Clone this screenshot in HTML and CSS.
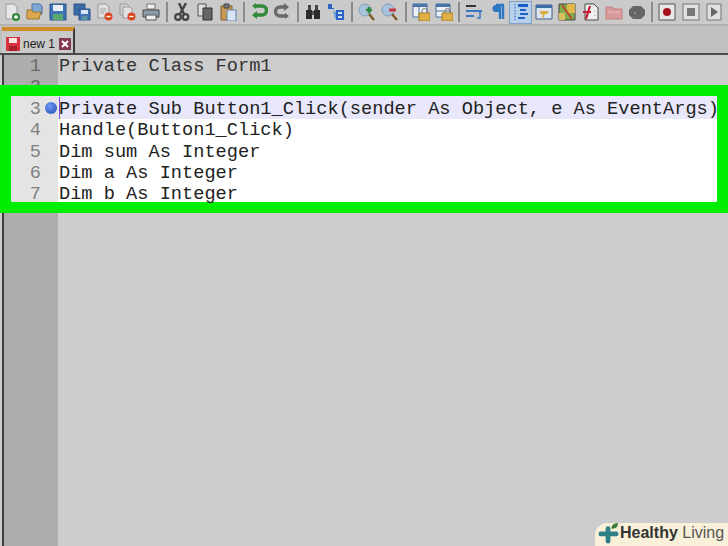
FILE: index.html
```html
<!DOCTYPE html>
<html lang="en">
<head>
<meta charset="utf-8">
<title>Notepad++ new 1</title>
<link rel="stylesheet" href="styles.css">
</head>
<body>
<div class="app">
  <div class="toolbar">
    <span class="tool"><svg viewBox="0 0 18 18"><path d="M3 1h8l3 3v12H3z" fill="#e6e6e6" stroke="#9a9a9a"/><circle cx="13" cy="14" r="4" fill="#2f8a3a"/><path d="M13 12v4M11 14h4" stroke="#fff" stroke-width="1.300"/></svg></span>
    <span class="tool"><svg viewBox="0 0 18 18"><path d="M6 1h8l2 2v8H6z" fill="#7fa8d8" stroke="#47709f"/><path d="M1 7h5l1 2h8l-2 7H1z" fill="#dca94f" stroke="#9b7430"/></svg></span>
    <span class="tool"><svg viewBox="0 0 18 18"><path d="M1 1h16v16H1z" fill="#3f73b8" stroke="#2b5288"/><path d="M4 2h10v6H4z" fill="#e6edf5"/><path d="M4 11h10v6H4z" fill="#5ba86b"/></svg></span>
    <span class="tool"><svg viewBox="0 0 18 18"><path d="M1 1h11v11H1z" fill="#3a6ca8" stroke="#2b5288"/><path d="M6 6h11v11H6z" fill="#3f73b8" stroke="#2b5288"/><path d="M8 7h7v4H8z" fill="#d8e4f0"/><path d="M8.500 13h6v4h-6z" fill="#5b93a0"/></svg></span>
    <span class="tool"><svg viewBox="0 0 18 18"><path d="M2 1h8l3 3v11H2z" fill="#dedede" stroke="#999"/><path d="M4 6h6M4 8h6M4 10h4" stroke="#aaa"/><circle cx="12.500" cy="13.500" r="4" fill="#d9481f"/><path d="M10.500 13.500h4" stroke="#fff" stroke-width="1.300"/></svg></span>
    <span class="tool"><svg viewBox="0 0 18 18"><path d="M1 1h7l2 2v9H1z" fill="#cfcfcf" stroke="#999"/><path d="M4 4h7l2 2v9H4z" fill="#e2e2e2" stroke="#999"/><circle cx="12.500" cy="13.500" r="4" fill="#d9481f"/><path d="M10.500 13.500h4" stroke="#fff" stroke-width="1.300"/></svg></span>
    <span class="tool"><svg viewBox="0 0 18 18"><path d="M5 1h8v5H5z" fill="#f0f0f0" stroke="#777"/><path d="M1 7h16v7H1z" fill="#8e9bab" stroke="#444"/><path d="M4 12h10v5H4z" fill="#eee" stroke="#555"/></svg></span>
    <span class="sep"></span>
    <span class="tool"><svg viewBox="0 0 18 18"><path d="M13 0L7 11M6 0l5 11" stroke="#444" stroke-width="2.400" fill="none"/><circle cx="5" cy="14" r="2.800" fill="none" stroke="#444" stroke-width="2.200"/><circle cx="12.500" cy="14" r="2.800" fill="none" stroke="#444" stroke-width="2.200"/></svg></span>
    <span class="tool"><svg viewBox="0 0 18 18"><path d="M2 1h8v12H2z" fill="#ddd" stroke="#555"/><path d="M7 5h9v12H7z" fill="#666" stroke="#333"/></svg></span>
    <span class="tool"><svg viewBox="0 0 18 18"><path d="M2 3h11v14H2z" fill="#c99a55" stroke="#7e5b2a"/><path d="M5 1h5v4H5z" fill="#777" stroke="#444"/><path d="M8 7h9v11H8z" fill="#d8e6f4" stroke="#5d83ad"/></svg></span>
    <span class="sep"></span>
    <span class="tool"><svg viewBox="0 0 18 18"><path d="M6 3h6a4.500 4.500 0 0 1 0 9H4" fill="none" stroke="#2f8a3a" stroke-width="3.400"/><path d="M7 8l-5 4 5 4z" fill="#2f8a3a"/><path d="M6 0v6L2 3z" fill="#2f8a3a"/></svg></span>
    <span class="tool"><svg viewBox="0 0 18 18"><path d="M12 4H7a4.500 4.500 0 0 0 0 9h7" fill="none" stroke="#6a6a6a" stroke-width="3.400"/><path d="M11 0l5 4-5 4z" fill="#6a6a6a"/><path d="M12 10v6l4-3z" fill="#6a6a6a"/></svg></span>
    <span class="sep"></span>
    <span class="tool"><svg viewBox="0 0 18 18"><path d="M2 7h6v9H2zM10 7h6v9h-6z" fill="#2c2c2c"/><path d="M4 2h3v5H4zM11 2h3v5h-3z" fill="#444"/><path d="M8 8h2v4H8z" fill="#555"/></svg></span>
    <span class="tool"><svg viewBox="0 0 18 18"><path d="M1 1h4v4h2v1H1z" fill="#2c62c4"/><path d="M6 7l5 4-3 5z" fill="#6aa0d8"/><path d="M9 7h8v10H9z" fill="#2c62c4"/><path d="M11 9h4v2h-4zM11 13h4v2h-4z" fill="#cfe0f6"/></svg></span>
    <span class="sep"></span>
    <span class="tool"><svg viewBox="0 0 18 18"><circle cx="7" cy="7" r="6" fill="#a8c4dc" stroke="#7e9cb8"/><path d="M11 11l5 6" stroke="#7a5a20" stroke-width="2.400"/><path d="M8 7h6M11 4v6" stroke="#2f8a3a" stroke-width="2.500"/></svg></span>
    <span class="tool"><svg viewBox="0 0 18 18"><circle cx="7" cy="7" r="6" fill="#a8c4dc" stroke="#7e9cb8"/><path d="M11 11l5 6" stroke="#7a5a20" stroke-width="2.400"/><path d="M8 7h7" stroke="#c8383e" stroke-width="3"/></svg></span>
    <span class="sep"></span>
    <span class="tool"><svg viewBox="0 0 18 18"><path d="M1 1h14v13H1z" fill="#eef2f7" stroke="#4a6f9c"/><path d="M1 1h14v3H1z" fill="#4a74a8"/><path d="M7 4v10" stroke="#4a6f9c"/><path d="M7 10h11v8H7z" fill="#e0b045" stroke="#a67e23"/><path d="M10 10V8a2.500 2.500 0 0 1 5 0v2" fill="none" stroke="#777"/></svg></span>
    <span class="tool"><svg viewBox="0 0 18 18"><path d="M1 1h14v13H1z" fill="#eef2f7" stroke="#4a6f9c"/><path d="M1 1h14v3H1z" fill="#4a74a8"/><path d="M1 8h14" stroke="#4a6f9c"/><path d="M7 10h11v8H7z" fill="#e0b045" stroke="#a67e23"/><path d="M10 10V8a2.500 2.500 0 0 1 5 0v2" fill="none" stroke="#777"/></svg></span>
    <span class="sep"></span>
    <span class="tool"><svg viewBox="0 0 18 18"><path d="M1 3h10" stroke="#333" stroke-width="2"/><path d="M1 8h16" stroke="#3a78c4" stroke-width="2"/><path d="M1 13h8" stroke="#3a78c4" stroke-width="2"/><path d="M15 8v7h-3" fill="none" stroke="#3a78c4" stroke-width="1.500"/></svg></span>
    <span class="tool"><svg viewBox="0 0 18 18"><path d="M7 2h8M11 2v14M14 2v14" stroke="#2d78c0" stroke-width="2.400" fill="none"/><path d="M7 2a3.500 3.500 0 0 0 0 7h3V2z" fill="#2d78c0"/></svg></span>
    <span class="tool tool-active"><svg viewBox="0 0 18 18"><path d="M6 1h10v3H6zM8 6h6v2H8zM8 10h8v2H8z" fill="#1c5fc8"/><path d="M6 14h7v2H6z" fill="#1c5fc8"/><path d="M3 1v16" stroke="#1c5fc8" stroke-dasharray="1.500 1.500"/></svg></span>
    <span class="tool"><svg viewBox="0 0 18 18"><path d="M1 2h16v14H1z" fill="#dbe6f2" stroke="#3d5f88"/><path d="M1 2h16v3H1z" fill="#3d6ea8"/><path d="M5 8h9l-2 3h-2l-2 5-1-1 1-4H5z" fill="#dcae42"/></svg></span>
    <span class="tool"><svg viewBox="0 0 18 18"><path d="M1 1h16v16H1z" fill="#7fae4a" stroke="#444"/><path d="M9 1h8v9H9z" fill="#e0b848"/><path d="M1 10h6v7H1z" fill="#d8c05c"/><path d="M4 2l10 14" stroke="#c4402f" stroke-width="1.800"/></svg></span>
    <span class="tool"><svg viewBox="0 0 18 18"><path d="M4 1h9l4 4v12H4z" fill="#efefef" stroke="#444"/><path d="M9 3L5 16M2 9h8" stroke="#c41e32" stroke-width="2.200"/><path d="M14 8v1M14 12v1" stroke="#999"/></svg></span>
    <span class="tool"><svg viewBox="0 0 18 18"><path d="M1 4h6l2 2h8v10H1z" fill="#d89a9a" stroke="#c08080"/><path d="M3 9h12" stroke="#e8bcbc"/></svg></span>
    <span class="tool"><svg viewBox="0 0 18 18"><path d="M5 3h8l4 4v5l-4 4H5l-4-4V7z" fill="#666"/><circle cx="7" cy="10" r="1" fill="#999"/></svg></span>
    <span class="sep"></span>
    <span class="tool"><svg viewBox="0 0 18 18"><path d="M1 1h16v16H1z" fill="#e8e8e8" stroke="#555"/><circle cx="9" cy="9" r="4" fill="#a8141e"/></svg></span>
    <span class="tool"><svg viewBox="0 0 18 18"><path d="M1 1h16v16H1z" fill="#e0e0e0" stroke="#777"/><path d="M5 5h8v8H5z" fill="#777"/></svg></span>
    <span class="tool"><svg viewBox="0 0 18 18"><path d="M2 1h14v16H2z" fill="#e0e0e0" stroke="#777"/><path d="M6 4l7 5-7 5z" fill="#666"/></svg></span>
  </div>

  <div class="tabbar">
    <div class="tab">
      <svg class="tab-save" viewBox="0 0 14 14"><path d="M0 0h14v14H0z" fill="#d8323e"/><path d="M3 1h8v5H3z" fill="#f6e4e4"/><path d="M3 9h8v5H3z" fill="#a81e2a"/></svg>
      <span class="tab-name">new 1</span>
      <span class="tab-x"><svg viewBox="0 0 12 12"><path d="M3 3l6 6M9 3l-6 6" stroke="#fff" stroke-width="2"/></svg></span>
    </div>
  </div>

  <div class="editor">
    <div class="line"><span class="num">1</span><span class="code">Private Class Form1</span></div>
    <div class="line"><span class="num">2</span><span class="code"></span></div>
    <div class="focus">
      <div class="line line-current"><span class="num">3</span><i class="bookmark"></i><span class="code">Private Sub Button1_Click(sender As Object, e As EventArgs)</span></div>
      <div class="line"><span class="num">4</span><span class="code">Handle(Button1_Click)</span></div>
      <div class="line"><span class="num">5</span><span class="code">Dim sum As Integer</span></div>
      <div class="line"><span class="num">6</span><span class="code">Dim a As Integer</span></div>
      <div class="line"><span class="num">7</span><span class="code">Dim b As Integer</span></div>
    </div>
  </div>

  <div class="badge">
    <svg class="badge-logo" viewBox="0 0 22 22"><path d="M8 9V6a2.500 2.500 0 0 1 5 0v3h6a2.500 2.500 0 0 1 0 5h-6v5a2.500 2.500 0 0 1-5 0v-5H3a2.500 2.500 0 0 1 0-5z" fill="#2b7f85"/><path d="M14 6c0-3 2-6 7-6 0 4-2 6-7 6z" fill="#3b7d3a"/></svg>
    <span class="badge-text"><b>Healthy</b> Living</span>
  </div>
</div>
</body>
</html>
```
FILE: styles.css
```css
* { box-sizing: border-box; }
html, body { margin: 0; padding: 0; }
body { width: 728px; height: 546px; overflow: hidden; background: #cbcbcb; font-family: "Liberation Sans", Arial, sans-serif; }
.app { position: relative; width: 728px; height: 546px; display: flex; flex-direction: column; overflow: hidden; }

.toolbar { height: 26px; flex: none; display: flex; align-items: center; padding: 0 0 0 .5px; background: #cacaca; border-bottom: 2px solid #b2b2b2; overflow: hidden; }
.tool { flex: none; width: 23.2px; height: 23px; display: flex; align-items: center; justify-content: center; }
.tool svg { width: 18px; height: 18px; display: block; filter: blur(.3px); }
.tool-active { background: #b8cfe9; outline: 1px solid #7fa3c8; outline-offset: -1px; }
.sep { flex: none; width: 2px; height: 20px; margin: 0 2.500px 0 3px; background: #8a8a8a; }

.tabbar { height: 29px; flex: none; display: flex; align-items: flex-end; padding-left: 2px; background: #c0c0c0; border-bottom: 2px solid #4a4a4a; }
.tab { width: 73px; height: 26px; display: flex; align-items: center; gap: 3px; padding: 4px 0 0 4px; background: #c9c9c9; border-top: 4px solid #d08b28; border-right: 2px solid #3c3c3c; }
.tab-save { width: 14px; height: 14px; flex: none; }
.tab-name { font-size: 12px; color: #222; }
.tab-x { width: 12px; height: 12px; margin-left: 1px; background: #843a55; display: flex; }
.tab-x svg { width: 12px; height: 12px; }

.editor { position: relative; flex: 1; margin-left: 2px; padding-top: 1px; border-left: 2px solid #3e3e3e; background: linear-gradient(to right, #adadad 54px, #cdcdcd 54px); }
.line { display: flex; height: 21.33px; line-height: 21.33px; font-family: "Liberation Mono", "Courier New", monospace; font-size: 18.65px; color: #333; white-space: pre; }
.num { width: 37px; flex: none; text-align: right; color: #6a6a6a; }
.code { margin-left: 18px; }

.focus { position: absolute; left: -4px; top: 30px; width: 728px; height: 128px; border: 11px solid #00ee00; background: linear-gradient(to right, #e4e4e4 47px, #fff 47px); }
.focus .line { margin-left: -11px; }
.focus .num { color: #808080; width: 41px; padding-left: 12px; }
.focus .code { margin-left: 18px; color: #222; }
.line-current { position: relative; height: 24.33px; padding-top: 2px; background: linear-gradient(to right, transparent 58px, #e8e8fa 58px) no-repeat 0 0 / 100% 23px; }
.focus .line-current { line-height: 22.33px; }
.line-current::after { content: ""; position: absolute; left: 59px; top: 1px; width: 1px; height: 22px; background: #7a4fc8; }
.bookmark { position: absolute; left: 45px; top: 6px; width: 12px; height: 12px; border-radius: 50%; background: radial-gradient(circle at 40% 35%, #6f9df0, #1f47b8); }

.badge { position: absolute; right: 0; bottom: 0; width: 133px; height: 23px; display: flex; align-items: center; gap: 1px; padding: 0 0 3px 3px; background: #f8f0d8; border-top-left-radius: 12px; }
.badge-logo { width: 21px; height: 21px; flex: none; margin-top: 1px; }
.badge-text { font-size: 16px; color: #555; white-space: nowrap; }
.badge-text b { color: #333; }
```
